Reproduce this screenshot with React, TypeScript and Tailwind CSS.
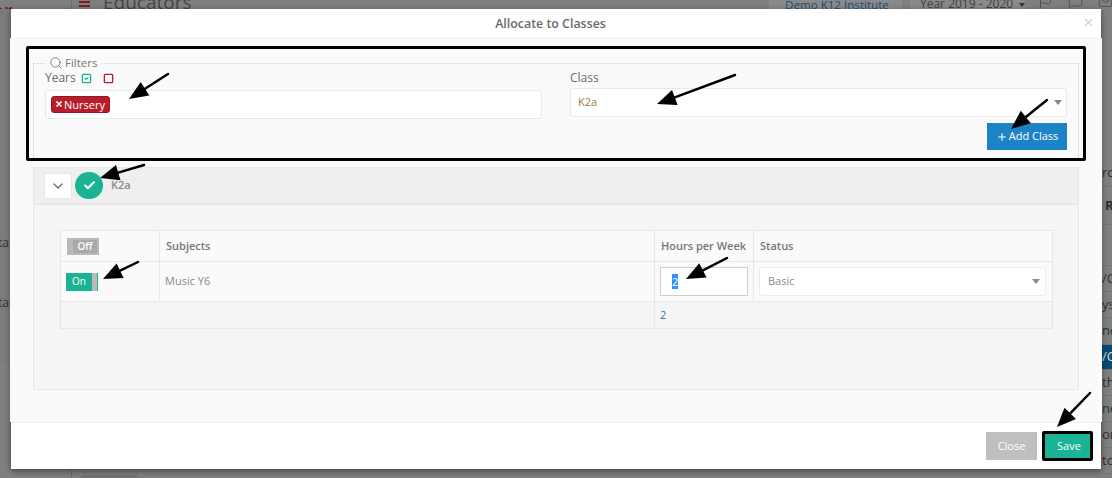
import React from 'react';
import { Search, SquareCheck, Square, ChevronDown, Check, Plus, X, Flag, MessageSquare, Mail } from 'lucide-react';

const arrows = [
    { x1: 168, y1: 74, x2: 129, y2: 99 },
    { x1: 735, y1: 75, x2: 657, y2: 104 },
    { x1: 1047, y1: 100, x2: 1011, y2: 129 },
    { x1: 144, y1: 165, x2: 100, y2: 178 },
    { x1: 138, y1: 262, x2: 103, y2: 279 },
    { x1: 727, y1: 258, x2: 686, y2: 279 },
    { x1: 1090, y1: 393, x2: 1057, y2: 427 },
];

const Arrow: React.FC<{ x1: number; y1: number; x2: number; y2: number }> = ({ x1, y1, x2, y2 }) => {
    const a = Math.atan2(y2 - y1, x2 - x1);
    const len = 19;
    const wing = 8;
    const bx = x2 - Math.cos(a) * len;
    const by = y2 - Math.sin(a) * len;
    const nx = -Math.sin(a) * wing;
    const ny = Math.cos(a) * wing;
    return (
        <g>
            <line x1={x1} y1={y1} x2={bx} y2={by} stroke="#000" strokeWidth={2.5} strokeLinecap="round" />
            <polygon points={`${x2},${y2} ${bx + nx},${by + ny} ${bx - nx},${by - ny}`} fill="#000" />
        </g>
    );
};

const Caret = () => <span className="w-0 h-0 border-x-[4px] border-x-transparent border-t-[5px] border-t-[#8a8a8a]" />;

const rightRows = [
    { text: 'rch', h: 'h-[28px]' },
    { text: 'R', h: 'h-[38px]', bold: true },
    { text: '', h: 'h-[41px]' },
    { text: '/C', h: 'h-[26px]' },
    { text: 'ysi', h: 'h-[26px]' },
    { text: 'ne', h: 'h-[27px]' },
    { text: '/C', h: 'h-[25px]', active: true },
    { text: 'th', h: 'h-[26px]' },
    { text: 'ne', h: 'h-[26px]' },
    { text: 'or', h: 'h-[26px]' },
    { text: 'to', h: 'h-[26px]' },
];

export default function App() {
    return (
        <div className="relative w-[1112px] h-[478px] overflow-hidden bg-[#7f7f7f] font-['Open_Sans',sans-serif] text-[#676a6c]">
            {/* page behind the modal */}
            <div className="flex items-start h-[9px]">
                <span className="w-[71px] shrink-0 text-[20px] leading-[20px] font-bold text-[#7a1f26] -ml-[8px] mt-[1px]">er</span>
                <div className="ml-[8px] border-l border-[#707070] h-[9px]" />
                <div className="ml-[7px] w-[11px] h-[8px] flex flex-col justify-between py-[1px]">
                    <span className="h-[2px] bg-[#7a1f26]" />
                    <span className="h-[2px] bg-[#7a1f26]" />
                </div>
                <span className="ml-[13px] text-[19px] leading-[10px] -mt-[3px] text-[#454647] whitespace-nowrap">Educators</span>
                <div className="ml-auto flex items-start">
                    <span className="w-[133px] h-[9px] bg-[#8a8a8a] pl-[16px] text-[11.6px] leading-[9px] text-[#1b4c75] overflow-hidden whitespace-nowrap">Demo K12 Institute</span>
                    <span className="ml-[8px] w-[115px] h-[9px] bg-[#8a8a8a] pl-[10px] text-[12px] leading-[8px] text-[#3f4041] overflow-hidden whitespace-nowrap flex items-start gap-[6px]">
                        Year 2019 - 2020
                        <span className="mt-[3px]"><span className="block w-0 h-0 border-x-[3px] border-x-transparent border-t-[4px] border-t-[#333]" /></span>
                    </span>
                    <span className="ml-[13px] w-[74px] shrink-0 h-[9px] overflow-hidden flex gap-[15px] text-[#3a3a3a]">
                        <Flag size={15} strokeWidth={1} className="-mt-[6px] shrink-0" />
                        <MessageSquare size={15} strokeWidth={1} className="-mt-[6px] shrink-0" />
                        <Mail size={15} strokeWidth={1} className="-mt-[6px] shrink-0" />
                    </span>
                </div>
            </div>
            <div className="flex h-[469px]">
                <div className="w-[10px] h-[354px] shrink-0 bg-[#7c7c7c] overflow-hidden text-[12px] text-[#333] pt-[226px] flex flex-col gap-[44px] whitespace-nowrap">
                    <span className="-ml-[2px] leading-[16px]">ta</span>
                    <span className="-ml-[2px] leading-[16px]">tac</span>
                </div>
                <div className="flex-1 self-end h-[9px] ml-[61px] border-l border-[#707070] pl-[9px] pt-[6px]">
                    <div className="w-[56px] h-[3px] bg-[#747474]" />
                </div>
                <div className="w-[10px] mt-[150px] shrink-0 flex flex-col text-[13px] text-[#2f2f2f] overflow-hidden">
                    {rightRows.map((r, i) => (
                        <div key={i} className={`${r.h} shrink-0 flex items-center border-b border-[#747474] whitespace-nowrap ${r.active ? 'bg-[#0a4a73] text-[#d8d8d8]' : ''} ${r.bold ? 'font-bold pl-[3px]' : ''}`}>
                            {r.text}
                        </div>
                    ))}
                </div>
            </div>

            {/* modal */}
            <div className="absolute left-[11px] top-[9px] w-[1090px] h-[460px] bg-white flex flex-col shadow-[0_2px_6px_rgba(0,0,0,0.5)]">
                <div className="relative h-[29px] shrink-0 flex items-center justify-center pr-[11px] text-[12.4px] font-semibold text-[#676a6c]">
                    <span className="mt-[1px]">Allocate to Classes</span>
                    <X size={13} strokeWidth={2} className="absolute right-[6px] top-[7px] text-[#cfcfcf]" />
                </div>
                <div className="h-[384px] shrink-0 -ml-[1px] w-[1092px] bg-[#fafafa] border-t border-[#efefef] px-[23px] pt-[17px] text-[11px]">
                    <fieldset className="h-[104px] border border-dotted border-[#cfcfcf] pl-[11px] pr-[11px]">
                        <legend className="ml-[0px] px-[4px] flex items-center gap-[2px] text-[11.5px] leading-[14px] text-[#777]">
                            <Search size={14} strokeWidth={1.5} />
                            Filters
                        </legend>
                        <div className="grid grid-cols-[497px_497px] gap-x-[28px]">
                            <div>
                                <div className="flex items-center h-[14px] mt-[1px] text-[12px]">
                                    Years
                                    <SquareCheck size={11} strokeWidth={2.8} className="ml-[5px] text-[#1ab394]" />
                                    <Square size={11} strokeWidth={3} className="ml-[11px] text-[#b8202f]" />
                                </div>
                                <div className="mt-[5px] h-[29px] bg-white border border-[#e9e9e9] rounded-[3px] flex items-center pl-[5px]">
                                    <span className="h-[17px] w-[59px] bg-[#b91d2b] border border-[#8f1822] rounded-[3px] text-white text-[11px] leading-[15px] flex items-center pl-[3px] -mt-[1px]">
                                        <X size={8} strokeWidth={5} className="mr-[1px]" />
                                        Nursery
                                    </span>
                                </div>
                            </div>
                            <div>
                                <div className="h-[14px] mt-[1px] text-[12px] leading-[14px]">Class</div>
                                <div className="mt-[3px] h-[29px] bg-white border border-[#e9e9e9] rounded-[3px] flex items-center justify-between pl-[7px] pr-[4px] text-[#a07a3f]">
                                    K2a
                                    <Caret />
                                </div>
                                <div className="flex justify-end mt-[6px]">
                                    <button className="w-[80px] h-[27px] bg-[#1c84c6] text-white text-[11px] flex items-center justify-center gap-[1px]">
                                        <Plus size={12} strokeWidth={2} />
                                        Add Class
                                    </button>
                                </div>
                            </div>
                        </div>
                    </fieldset>

                    <div className="mt-[7px] h-[223px] border border-[#e7e7e7] bg-[#f5f5f5]">
                        <div className="h-[37px] bg-[#efefef] border-b-2 border-[#e7e7e7] flex items-center pl-[10px]">
                            <span className="w-[28px] h-[26px] bg-white border border-[#e7e7e7] flex items-center justify-center text-[#6b6b6b]">
                                <ChevronDown size={16} strokeWidth={2} />
                            </span>
                            <span className="ml-[3px] w-[28px] h-[27px] rounded-full bg-[#1ab394] flex items-center justify-center text-white">
                                <Check size={13} strokeWidth={4} />
                            </span>
                            <span className="ml-[8px] text-[11px] font-semibold text-[#8a8a8a]">K2a</span>
                        </div>
                        <div className="pt-[25px] px-[26px]">
                            <table className="w-[992px] table-fixed border-collapse border border-[#e7e7e7] bg-[#fafafa] text-[11px]">
                                <colgroup>
                                    <col className="w-[99px]" />
                                    <col className="w-[495px]" />
                                    <col className="w-[99px]" />
                                    <col className="w-[299px]" />
                                </colgroup>
                                <tbody>
                                    <tr className="h-[31px] font-semibold text-[#777]">
                                        <td className="border border-[#e7e7e7] pl-[6px]">
                                            <span className="w-[32px] h-[17px] bg-[#b9b9b9] flex items-center justify-end pr-[5px] text-[10px] text-white">
                                                <span className="bg-[#a9a9a9] w-full ml-[6px] -mr-[3px] h-[13px] leading-[13px] text-center">Off</span>
                                            </span>
                                        </td>
                                        <td className="border border-[#e7e7e7] pl-[6px]">Subjects</td>
                                        <td className="border border-[#e7e7e7] pl-[6px] whitespace-nowrap">Hours per Week</td>
                                        <td className="border border-[#e7e7e7] pl-[6px]">Status</td>
                                    </tr>
                                    <tr className="h-[40px] text-[#8a8a8a]">
                                        <td className="border border-[#e7e7e7] pl-[5px]">
                                            <span className="w-[32px] h-[18px] bg-[#1ab394] flex items-center text-white text-[10px] font-medium pl-[6px] relative">
                                                On
                                                <span className="absolute right-[1px] top-0 w-[5px] h-full bg-[#bbb]" />
                                            </span>
                                        </td>
                                        <td className="border border-[#e7e7e7] pl-[5px]">Music Y6</td>
                                        <td className="border border-[#e7e7e7] pl-[5px]">
                                            <div className="w-[88px] h-[29px] bg-white border border-[#cfcfcf] flex items-center pl-[11px] text-white">
                                                <span className="bg-[#3390ff] leading-[15px]">2</span>
                                            </div>
                                        </td>
                                        <td className="border border-[#e7e7e7] pl-[5px]">
                                            <div className="w-[287px] h-[29px] bg-white border border-[#ececec] rounded-[3px] flex items-center justify-between pl-[8px] pr-[5px]">
                                                Basic
                                                <Caret />
                                            </div>
                                        </td>
                                    </tr>
                                    <tr className="h-[27px] bg-[#f5f5f5] text-[#3f6f9a]">
                                        <td className="border border-[#e7e7e7]" colSpan={2} />
                                        <td className="border-y border-[#e7e7e7] pl-[5px]" colSpan={2}>2</td>
                                    </tr>
                                </tbody>
                            </table>
                        </div>
                    </div>
                </div>
                <div className="flex-1 flex items-center justify-end gap-[5px] pr-[8px] border-t border-[#efefef] text-[11px] text-white">
                    <button className="w-[51px] h-[28px] bg-[#bfbfbf] font-medium">Close</button>
                    <button className="w-[51px] h-[30px] bg-[#1ab394] border-[3px] border-black rounded-[2px] font-medium pl-[3px] pt-[1px]">Save</button>
                </div>
            </div>

            {/* annotations drawn on top of the screenshot */}
            <div className="absolute left-[26px] top-[46px] w-[1060px] h-[115px] border-[3px] border-black rounded-[2px] pointer-events-none" />
            <svg className="absolute inset-0 pointer-events-none" width={1112} height={478}>
                {arrows.map((a, i) => <Arrow key={i} {...a} />)}
            </svg>
        </div>
    );
}
